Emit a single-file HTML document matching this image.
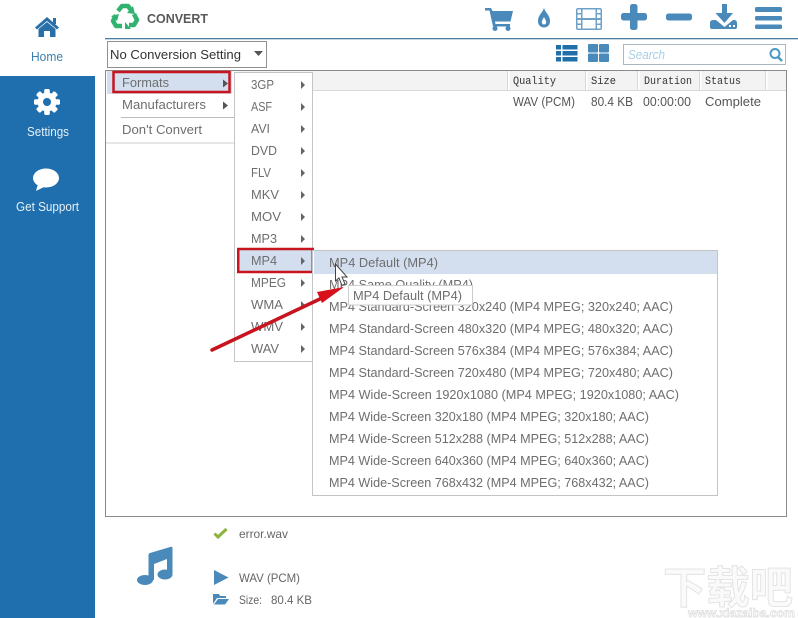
<!DOCTYPE html>
<html><head><meta charset="utf-8"><style>
html,body{margin:0;padding:0;background:#fff;width:798px;height:618px;overflow:hidden}
svg{display:block}
text{font-family:"Liberation Sans","Noto Sans CJK SC",sans-serif;font-size:12.5px;fill:#6b6b6b}
.m{fill:#6e6e6e}
.h{font-family:"Liberation Mono",monospace;font-size:11px;fill:#333}
.i{fill:#4a8aba}
.t{fill:#666}
</style></head><body>
<svg width="798" height="618" viewBox="0 0 798 618" xmlns="http://www.w3.org/2000/svg">
<rect width="798" height="618" fill="#fff"/>
<!-- sidebar -->
<rect x="0" y="76" width="95" height="542" fill="#1f6fae"/>
<path d="M35 27.5 47 17 59 27.5 57 29.5 47 21 37 29.5Z" fill="#2a70a8"/>
<path d="M38.500 29 47 22 55.500 29V37H50V31H44V37H38.500Z" fill="#2a70a8"/>
<rect x="53" y="18" width="3" height="6" fill="#2a70a8"/>
<text lengthAdjust="spacingAndGlyphs" x="31" y="61" textLength="32" style="fill:#3c7fb0;font-size:12.500px">Home</text>
<g transform="translate(47 102)" fill="#fff">
<circle r="9.500"/>
<rect x="-2.800" y="-13" width="5.600" height="26" rx="1.500"/><rect x="-2.800" y="-13" width="5.600" height="26" rx="1.500" transform="rotate(45)"/><rect x="-2.800" y="-13" width="5.600" height="26" rx="1.500" transform="rotate(90)"/><rect x="-2.800" y="-13" width="5.600" height="26" rx="1.500" transform="rotate(135)"/>
<circle r="4" fill="#1f6fae"/>
</g>
<text lengthAdjust="spacingAndGlyphs" x="27" y="136" textLength="42" style="fill:#e6f0f7">Settings</text>
<ellipse cx="46" cy="178" rx="13" ry="9.500" fill="#fff"/>
<path d="M38 184 36 191 46 186Z" fill="#fff"/>
<text lengthAdjust="spacingAndGlyphs" x="16" y="211" textLength="63" style="fill:#e6f0f7">Get Support</text>
<!-- header -->
<g fill="none" stroke="#2fb36f" stroke-width="4.500">
<path d="M118 11 122 6H128L131 10" stroke-linejoin="round"/>
<path d="M134 14 137 20 134 25H129" stroke-linejoin="round"/>
<path d="M122 26H116L113 21 116 15" stroke-linejoin="round"/>
</g>
<path d="M133 6 135 14 127 13Z M125 22 131 29 125 29Z M111 16 119 14 117 21Z" fill="#2fb36f"/>
<text lengthAdjust="spacingAndGlyphs" x="147" y="23" textLength="61" style="font-weight:bold;font-size:12.500px;fill:#595959">CONVERT</text>
<rect x="105" y="38" width="693" height="1.300" fill="#4a7f9f"/>
<!-- toolbar icons -->
<g class="i">
<path d="M485 8H491L492.500 11H513L510.500 21.500H495L495.500 24H510V26.500H493L489.500 10.500H485Z"/>
<circle cx="495" cy="28.500" r="2.500"/><circle cx="508" cy="28.500" r="2.500"/>
<path fill-rule="evenodd" d="M544 8C545.500 13 550 15 550 21 550 25 547.500 27.500 544 27.500 540.500 27.500 538 25 538 21 538 15 542.500 13 544 8ZM544 17C542.800 19.500 541.800 20.500 541.800 22 541.800 23.500 542.800 24.500 544 24.500 545.200 24.500 546.200 23.500 546.200 22 546.200 20.500 545.200 19.500 544 17Z"/>
<path fill-rule="evenodd" d="M578 8H600Q602 8 602 10V28Q602 30 600 30H578Q576 30 576 28V10Q576 8 578 8ZM577.500 9.500V13H581V9.500ZM577.500 14.500V18H581V14.500ZM577.500 20V23.500H581V20ZM577.500 25V28.500H581V25ZM597 9.500V13H600.500V9.500ZM597 14.500V18H600.500V14.500ZM597 20V23.500H600.500V20ZM597 25V28.500H600.500V25ZM582.500 9.500V18H595.500V9.500ZM582.500 20V28.500H595.500V20Z" opacity=".8"/>
<rect x="621" y="13" width="26" height="7.500" rx="2.500"/><rect x="630" y="4" width="7.500" height="26" rx="2.500"/>
<rect x="666" y="13.500" width="26" height="7" rx="2.500"/>
<path d="M722 4H727V13H733L724.500 23 715.500 13H722Z"/>
<path fill-rule="evenodd" d="M710 23Q710 20 713 20H716L724.500 27 733 20H734Q737 20 737 23V27Q737 29 735 29H712Q710 29 710 27ZM729 25V27H731V25ZM733 25V27H735V25Z"/>
<rect x="755" y="7" width="27" height="5" rx="1.500"/><rect x="755" y="16" width="27" height="4.500" rx="1.500"/><rect x="755" y="24.500" width="27" height="4.500" rx="1.500"/>
</g>
<!-- dropdown -->
<rect x="107.500" y="41.500" width="159" height="26" fill="#fff" stroke="#222" stroke-dasharray="1 1" shape-rendering="crispEdges"/>
<text lengthAdjust="spacingAndGlyphs" x="110" y="59" textLength="131" style="fill:#333;font-size:13px">No Conversion Setting</text>
<path d="M254 51H263L258.500 56Z" fill="#555"/>
<!-- view icons -->
<g fill="#1f6fa8">
<rect x="556" y="45" width="5" height="4.500"/><rect x="562.500" y="45" width="15" height="4.500"/>
<rect x="556" y="51" width="5" height="4.500"/><rect x="562.500" y="51" width="15" height="4.500"/>
<rect x="556" y="57" width="5" height="4.500"/><rect x="562.500" y="57" width="15" height="4.500"/>
</g>
<g fill="#4a8aba">
<rect x="588" y="44" width="10" height="8.500" rx="1"/><rect x="599" y="44" width="10" height="8.500" rx="1"/>
<rect x="588" y="53.500" width="10" height="8.500" rx="1"/><rect x="599" y="53.500" width="10" height="8.500" rx="1"/>
</g>
<rect x="623.500" y="44.500" width="162" height="20" fill="#fff" stroke="#a8b8c2"/>
<text lengthAdjust="spacingAndGlyphs" x="628" y="59" textLength="37" style="font-style:italic;fill:#a8d0e6;font-size:12.500px">Search</text>
<circle cx="775" cy="53.500" r="4.500" fill="none" stroke="#4a9ac4" stroke-width="2"/>
<path d="M778 57 782 61" stroke="#4a9ac4" stroke-width="2.500"/>
<!-- list box -->
<rect x="105.500" y="70.500" width="681" height="446" fill="#fff" stroke="#8a8a8a"/>
<rect x="106" y="71" width="680" height="19" fill="#f3f3f3"/>
<g fill="#fff"><rect x="508" y="71" width="1.500" height="19"/><rect x="586" y="71" width="1.500" height="19"/><rect x="638" y="71" width="1.500" height="19"/><rect x="700" y="71" width="1.500" height="19"/><rect x="766" y="71" width="1.500" height="19"/></g>
<g fill="#d8d8d8"><rect x="507" y="71" width="1" height="19"/><rect x="585" y="71" width="1" height="19"/><rect x="637" y="71" width="1" height="19"/><rect x="699" y="71" width="1" height="19"/><rect x="765" y="71" width="1" height="19"/><rect x="106" y="90" width="680" height="1"/></g>
<text lengthAdjust="spacingAndGlyphs" class="h" x="513" y="84" textLength="43">Quality</text>
<text lengthAdjust="spacingAndGlyphs" class="h" x="591" y="84" textLength="25">Size</text>
<text lengthAdjust="spacingAndGlyphs" class="h" x="644" y="84" textLength="48">Duration</text>
<text lengthAdjust="spacingAndGlyphs" class="h" x="705" y="84" textLength="36">Status</text>
<text lengthAdjust="spacingAndGlyphs" x="513" y="106" textLength="62" style="fill:#555">WAV (PCM)</text>
<text lengthAdjust="spacingAndGlyphs" x="591" y="106" textLength="42" style="fill:#555">80.4 KB</text>
<text lengthAdjust="spacingAndGlyphs" x="643" y="106" textLength="48" style="fill:#555">00:00:00</text>
<text lengthAdjust="spacingAndGlyphs" x="705" y="106" textLength="56" style="fill:#555">Complete</text>
<!-- menu 1 -->
<rect x="106" y="71" width="129" height="72" fill="#fff"/>
<rect x="106" y="142.500" width="129" height="1" fill="#ccc"/>
<rect x="107" y="71" width="125" height="23" fill="#d3deef"/>
<text lengthAdjust="spacingAndGlyphs" class="m" x="122" y="87" textLength="47">Formats</text>
<path d="M223 79.500 228 83.500 223 87.500Z" fill="#555"/>
<text lengthAdjust="spacingAndGlyphs" class="m" x="122" y="109" textLength="84">Manufacturers</text>
<path d="M223 101.500 228 105.500 223 109.500Z" fill="#555"/>
<rect x="121" y="117" width="113" height="1" fill="#bbb"/>
<text lengthAdjust="spacingAndGlyphs" class="m" x="122" y="134" textLength="80">Don't Convert</text>
<rect x="113.500" y="72" width="116" height="20" fill="none" stroke="#c8141e" stroke-width="2.500"/>
<!-- menu 2 -->
<rect x="234.500" y="72.500" width="78" height="289" fill="#fff" stroke="#c4c4c4"/>
<rect x="238" y="250" width="75" height="22" fill="#d3deef"/>
<text lengthAdjust="spacingAndGlyphs" class="m" x="251" y="89" textLength="23">3GP</text>
<text lengthAdjust="spacingAndGlyphs" class="m" x="251" y="111" textLength="21">ASF</text>
<text lengthAdjust="spacingAndGlyphs" class="m" x="251" y="133" textLength="19">AVI</text>
<text lengthAdjust="spacingAndGlyphs" class="m" x="251" y="155" textLength="26">DVD</text>
<text lengthAdjust="spacingAndGlyphs" class="m" x="251" y="177" textLength="20">FLV</text>
<text lengthAdjust="spacingAndGlyphs" class="m" x="251" y="199" textLength="28">MKV</text>
<text lengthAdjust="spacingAndGlyphs" class="m" x="251" y="221" textLength="30">MOV</text>
<text lengthAdjust="spacingAndGlyphs" class="m" x="251" y="243" textLength="26">MP3</text>
<text lengthAdjust="spacingAndGlyphs" class="m" x="251" y="265" textLength="26">MP4</text>
<text lengthAdjust="spacingAndGlyphs" class="m" x="251" y="287" textLength="35">MPEG</text>
<text lengthAdjust="spacingAndGlyphs" class="m" x="251" y="309" textLength="32">WMA</text>
<text lengthAdjust="spacingAndGlyphs" class="m" x="251" y="331" textLength="32">WMV</text>
<text lengthAdjust="spacingAndGlyphs" class="m" x="251" y="353" textLength="28">WAV</text>
<g fill="#666">
<path d="M301 81 305 85 301 89Z"/><path d="M301 103 305 107 301 111Z"/><path d="M301 125 305 129 301 133Z"/><path d="M301 147 305 151 301 155Z"/><path d="M301 169 305 173 301 177Z"/><path d="M301 191 305 195 301 199Z"/><path d="M301 213 305 217 301 221Z"/><path d="M301 235 305 239 301 243Z"/><path d="M301 257 305 261 301 265Z"/><path d="M301 279 305 283 301 287Z"/><path d="M301 301 305 305 301 309Z"/><path d="M301 323 305 327 301 331Z"/><path d="M301 345 305 349 301 353Z"/>
</g>
<rect x="238.250" y="249" width="74.500" height="23" fill="none" stroke="#c8141e" stroke-width="2.500"/>
<!-- menu 3 -->
<rect x="312.500" y="250.500" width="405" height="245" fill="#fff" stroke="#c4c4c4"/>
<rect x="314" y="251" width="403" height="23" fill="#d3deef"/>
<text lengthAdjust="spacingAndGlyphs" class="m" x="329" y="267" textLength="109">MP4 Default (MP4)</text>
<text lengthAdjust="spacingAndGlyphs" class="m" x="329" y="289" textLength="144">MP4 Same Quality (MP4)</text>
<text lengthAdjust="spacingAndGlyphs" class="m" x="329" y="311" textLength="344">MP4 Standard-Screen 320x240 (MP4 MPEG; 320x240; AAC)</text>
<text lengthAdjust="spacingAndGlyphs" class="m" x="329" y="333" textLength="344">MP4 Standard-Screen 480x320 (MP4 MPEG; 480x320; AAC)</text>
<text lengthAdjust="spacingAndGlyphs" class="m" x="329" y="355" textLength="344">MP4 Standard-Screen 576x384 (MP4 MPEG; 576x384; AAC)</text>
<text lengthAdjust="spacingAndGlyphs" class="m" x="329" y="377" textLength="344">MP4 Standard-Screen 720x480 (MP4 MPEG; 720x480; AAC)</text>
<text lengthAdjust="spacingAndGlyphs" class="m" x="329" y="399" textLength="350">MP4 Wide-Screen 1920x1080 (MP4 MPEG; 1920x1080; AAC)</text>
<text lengthAdjust="spacingAndGlyphs" class="m" x="329" y="421" textLength="320">MP4 Wide-Screen 320x180 (MP4 MPEG; 320x180; AAC)</text>
<text lengthAdjust="spacingAndGlyphs" class="m" x="329" y="443" textLength="320">MP4 Wide-Screen 512x288 (MP4 MPEG; 512x288; AAC)</text>
<text lengthAdjust="spacingAndGlyphs" class="m" x="329" y="465" textLength="320">MP4 Wide-Screen 640x360 (MP4 MPEG; 640x360; AAC)</text>
<text lengthAdjust="spacingAndGlyphs" class="m" x="329" y="487" textLength="320">MP4 Wide-Screen 768x432 (MP4 MPEG; 768x432; AAC)</text>
<!-- tooltip -->
<rect x="348.500" y="285.500" width="124" height="19.500" fill="#fff" stroke="#ccc"/>
<text lengthAdjust="spacingAndGlyphs" class="m" x="353" y="300" textLength="109">MP4 Default (MP4)</text>
<!-- arrow -->
<path d="M212 350 322 298" stroke="#c8141e" stroke-width="3.500" stroke-linecap="round"/>
<path d="M317 292 344 287 322 303Z" fill="#d8101c"/>
<!-- cursor -->
<path d="M335.500 264V281L339 278 342 285.500 345 284 342 277H347Z" fill="#fff" stroke="#444" stroke-width="1"/>
<!-- bottom info -->
<path d="M214.500 533.500 218 537 226.500 529" fill="none" stroke="#8ab43c" stroke-width="3"/>
<text lengthAdjust="spacingAndGlyphs" x="239" y="538" textLength="49" class="t" style="font-size:12px">error.wav</text>
<path d="M150 553 171 546.800Q172.500 546.500 172.500 548V575H167V559L154 564V580H148.500V555Q148.500 553.500 150 553Z" fill="#4a8aba"/>
<ellipse cx="145" cy="580" rx="8" ry="5" fill="#4a8aba"/>
<ellipse cx="165" cy="574.500" rx="7.500" ry="5" fill="#4a8aba"/>
<path d="M214 570 228.500 577.500 214 585Z" fill="#4a8aba"/>
<text lengthAdjust="spacingAndGlyphs" x="239" y="582" textLength="61" class="t" style="font-size:12px">WAV (PCM)</text>
<path d="M213 594H219L220 596H226V598H217L213 604Z M218 599H229L225 604.500H214Z" fill="#4a8aba"/>
<text lengthAdjust="spacingAndGlyphs" x="239" y="604" textLength="23" class="t" style="font-size:12px">Size:</text>
<text lengthAdjust="spacingAndGlyphs" x="271" y="604" textLength="41" class="t" style="font-size:12px">80.4 KB</text>
<!-- watermark -->
<text lengthAdjust="spacingAndGlyphs" x="663" y="603" textLength="130" style="font-size:44px;font-weight:bold;fill:#fafafa;stroke:#e4e4e4;stroke-width:1;font-family:'Noto Sans CJK SC',sans-serif">下载吧</text>
<text lengthAdjust="spacingAndGlyphs" x="688" y="617" textLength="107" style="font-size:12px;font-weight:bold;fill:#fff;stroke:#dcdcdc;stroke-width:.7">www.xiazaiba.com</text>
</svg>
</body></html>
